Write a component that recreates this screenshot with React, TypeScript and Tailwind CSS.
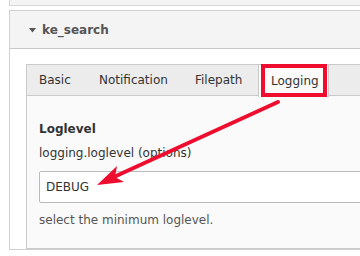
export default function App() {
  // tab widths taken from the screenshot
  const tabs = [
    { label: "Basic", w: "w-[56px]" },
    { label: "Notification", w: "w-[92px]" },
    { label: "Filepath", w: "w-[71px]" },
    { label: "Logging", w: "w-[71px]" },
  ]
  const active = "Logging"

  return (
    <div className="relative w-[360px] h-[256px] overflow-hidden bg-white font-['DejaVu_Sans',sans-serif] text-[12px] text-[#333]">
      {/* end of the previous panel */}
      <div className="ml-[9px] w-[400px] h-[6px] bg-[#f4f4f4] border-l border-b border-[#d6d6d6]" />

      <div className="mt-[4px] ml-[9px] w-[400px] border border-[#d0d0d0]">
        <div className="h-[38px] bg-[#f4f4f4] border-b border-[#c8c8c8] flex items-center pl-[19px] gap-[6px] text-[#555] font-bold">
          <svg width="7" height="5" viewBox="0 0 7 5" className="mt-[1px]">
            <path d="M0 0 L7 0 L3.5 4.5 Z" fill="#555" />
          </svg>
          <span>ke_search</span>
        </div>

        <div className="pl-[16px] pt-[15px]">
          <div className="border border-[#cacaca]">
            <div className="flex h-[31px] gap-1 bg-[#ececec] border-b border-[#cacaca]">
              {tabs.map((t) =>
                t.label === active ? (
                  <div
                    key={t.label}
                    className={`${t.w} shrink-0 -mt-px -mb-px h-[33px] pl-3 flex items-center bg-[#fafafa] border border-b-0 border-[#cacaca] whitespace-nowrap`}
                  >
                    {t.label}
                  </div>
                ) : (
                  <div key={t.label} className={`${t.w} shrink-0 pl-3 flex items-center whitespace-nowrap`}>
                    {t.label}
                  </div>
                )
              )}
            </div>

            <div className="bg-[#fafafa] px-3 pt-[24px] pb-[19px] leading-[18px]">
              <div className="font-bold">Loglevel</div>
              <div className="mt-[6px]">logging.loglevel (options)</div>
              <div className="mt-[9px] h-[32px] bg-white border border-[#bbb] rounded-[2px] flex items-center pl-[6px]">
                DEBUG
              </div>
              <div className="mt-[8px] text-[#555]">select the minimum loglevel.</div>
            </div>
          </div>
        </div>
      </div>

      {/* annotation */}
      <svg className="absolute left-0 top-0" width="360" height="256" viewBox="0 0 360 256">
        <rect x="263" y="66" width="62" height="29" fill="none" stroke="#ee0d2e" strokeWidth="4" />
        <line x1="278" y1="102" x2="116" y2="176" stroke="#ee0d2e" strokeWidth="4" strokeLinecap="round" />
        <polygon points="97,185 117,166 115,177 124,182" fill="#ee0d2e" />
      </svg>
    </div>
  )
}
